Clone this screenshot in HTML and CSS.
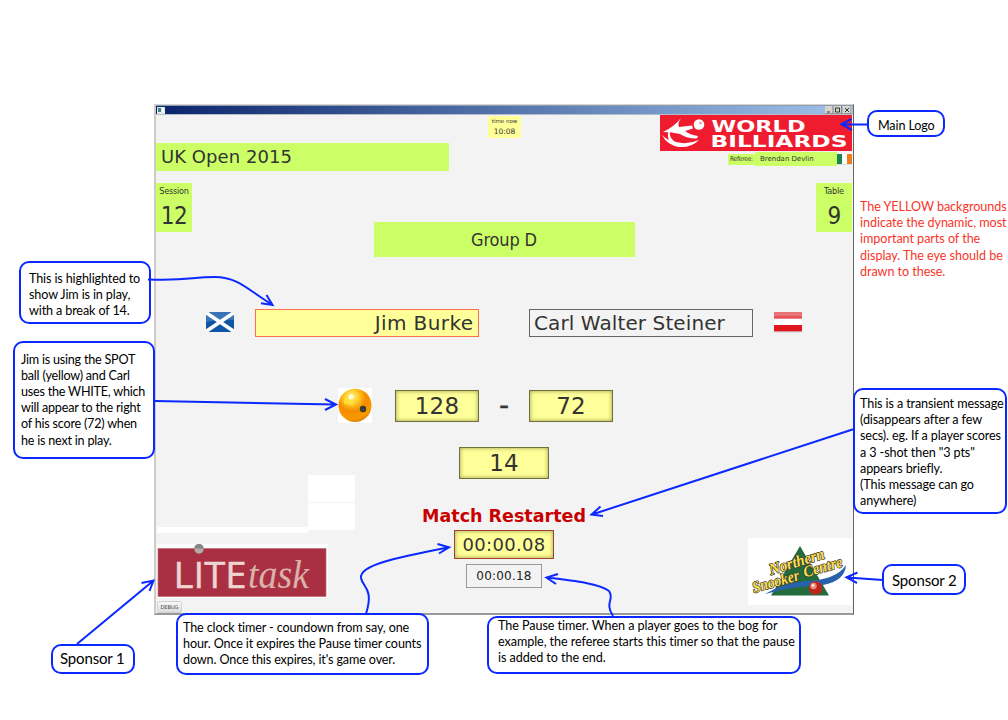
FILE: index.html
```html
<!DOCTYPE html>
<html lang="en">
<head>
<meta charset="utf-8">
<title>Scoreboard guide</title>
<link rel="stylesheet" href="styles.css">
</head>
<body>
<main class="canvas">
  <section class="window">
    <header class="titlebar">
      <svg class="appicon" width="8" height="7" viewBox="0 0 8 7"><rect width="8" height="7" fill="#e6eaea"/><rect x="1" y="1" width="3" height="4" fill="#398485"/><rect x="5" y="1" width="2" height="4" fill="#fff"/></svg>
      <svg class="controls" width="26" height="8" viewBox="0 0 26 8"><g fill="#d8d5cd"><rect width="8" height="8"/><rect x="8.500" width="8" height="8"/><rect x="18" width="8" height="8"/></g><path d="M0 7.700H8V0M8.500 7.700H16.500V0M18 7.700H26V0" fill="none" stroke="#55534f" stroke-width=".6"/><path d="M2 6H5M10.500 2H14.500V6H10.500ZM20 2L24 6M24 2L20 6" fill="none" stroke="#222" stroke-width=".9"/></svg>
    </header>
    <div class="board">
      <div class="head">
        <div class="event"><span class="t-event">UK Open 2015</span></div>
        <div class="now"><span class="t-nowlabel">time now</span><span class="t-now">10:08</span></div>
        <div class="brand">
          <svg class="brandlogo" width="192" height="36" viewBox="0 0 192 36">
            <rect width="192" height="36" fill="#ee1c2e"/>
            <g fill="#fff">
              <circle cx="39" cy="9.500" r="5.300"/>
              <path d="M3 17Q14 12 21 3Q17 9 19 12L32 10.500L33 13.500L25 16Q30 20 38 21L37 23.500Q28 24 20 19Q12 17 3 17Z"/>
              <path d="M11 12Q7 23 16 27Q27 30 39 25Q31 33 19 32Q7 30 2 20Q6 24 9 25Q6 18 11 12Z"/>
            </g>
            <circle cx="40.500" cy="8" r="1.500" fill="#f8a5ab"/>
            <g fill="#fff" font-family="DejaVu Sans" font-weight="bold">
              <text x="51.500" y="16.700" font-size="15" textLength="94" lengthAdjust="spacingAndGlyphs">WORLD</text>
              <text x="50.500" y="31.800" font-size="15" textLength="137" lengthAdjust="spacingAndGlyphs">BILLIARDS</text>
            </g>
          </svg>
          <div class="referee">
            <span class="reflabel"><span class="t-ref">Referee:</span></span>
            <span class="refname"><span class="t-refname">Brendan Devlin</span></span>
            <span class="irish"></span>
          </div>
        </div>
      </div>
      <div class="meta">
        <div class="tile"><span class="t-tilelabel">Session</span><span class="t-tile">12</span></div>
        <div class="group"><span class="t-group">Group D</span></div>
        <div class="tile"><span class="t-tilelabel">Table</span><span class="t-tile">9</span></div>
      </div>
      <div class="players">
        <svg width="28" height="21" viewBox="0 0 28 21"><rect width="28" height="20" fill="#0d55a5"/><path d="M0 0H28V8Q14 7 0 10Z" fill="#3975b6"/><path d="M0 .6L28 19.400M28 .6L0 19.400" stroke="#fff" stroke-width="3.600"/></svg>
        <div class="name active"><span class="t-jim">Jim Burke</span></div>
        <div class="name"><span class="t-carl">Carl Walter Steiner</span></div>
        <svg width="28" height="21" viewBox="0 0 28 21"><rect width="28" height="20" fill="#fff"/><rect width="28" height="6.500" fill="#e87478"/><path d="M0 4H28V6.500H0Z" fill="#e55359"/><rect y="13" width="28" height="6.500" fill="#e0161e"/><path d="M0 19.800H28" stroke="#b9a5a5" stroke-width=".8"/></svg>
      </div>
      <div class="scores">
        <svg class="ball" width="34" height="35" viewBox="0 0 34 35">
          <defs><radialGradient id="amber" cx=".4" cy=".25" r=".78"><stop offset="0" stop-color="#fff39c"/><stop offset=".3" stop-color="#ffc620"/><stop offset=".55" stop-color="#f58b00"/><stop offset=".85" stop-color="#f89a00"/><stop offset="1" stop-color="#d87c00"/></radialGradient></defs>
          <rect width="34" height="35" fill="#fff"/><circle cx="17" cy="17.300" r="16.600" fill="url(#amber)"/>
          <path d="M6 11Q12 6 17 9L15 17L6 16Z" fill="#ffe53a" opacity=".7"/><circle cx="13" cy="9" r="2.500" fill="#fff" opacity=".8"/>
          <circle cx="25" cy="21" r="3.200" fill="#353c30"/><circle cx="25.300" cy="21.800" r="1" fill="#465248"/>
        </svg>
        <div class="num"><span class="t-score">128</span></div>
        <span class="dash">-</span>
        <div class="num"><span class="t-score">72</span></div>
      </div>
      <div class="lower">
        <div class="left">
          <div class="blanks"><i class="strip"></i><span class="pair"><i></i><i></i></span></div>
          <svg class="lite" width="171" height="54" viewBox="0 0 171 54">
            <rect width="171" height="54" fill="#fff"/><rect x="1" y="4.500" width="168" height="48" fill="#a93043" stroke="#bf6a77" stroke-width=".7"/>
            <circle cx="42" cy="5" r="4.700" fill="#b5aca9"/><path d="M37.300 4.500A4.700 4.700 0 0 1 46.700 4.500Z" fill="#858684"/>
            <g fill="#eed5d0">
              <text x="16.500" y="44" font-family="Open Sans" font-size="37" textLength="73" lengthAdjust="spacingAndGlyphs" stroke="#eed5d0" stroke-width=".5">LITE</text>
              <text x="91" y="44" font-family="Liberation Serif" font-style="italic" font-size="39" textLength="61" lengthAdjust="spacingAndGlyphs" fill="#d9b2ac">task</text>
            </g>
          </svg>
          <button class="debug" type="button"><span class="t-debug">DEBUG</span></button>
        </div>
        <div class="middle">
          <div class="num break"><span class="t-score">14</span></div>
          <div class="message"><span class="t-message">Match Restarted</span></div>
          <div class="num timer"><span class="t-timer">00:00.08</span></div>
          <div class="pause"><span class="t-pause">00:00.18</span></div>
        </div>
        <svg class="northern" width="104" height="67" viewBox="0 0 104 67">
          <rect width="104" height="67" fill="#fff"/>
          <path d="M52 8L81 57.500H23Z" fill="#236b3c"/>
          <path d="M17 56Q35 45 58 43Q88 42 98 27Q97 43 75 47Q45 48 17 56Z" fill="#2862ac"/>
          <circle cx="67.500" cy="50" r="6.800" fill="#bd261f"/><circle cx="65.500" cy="48" r="3.200" fill="#e78c78"/><circle cx="65" cy="47.500" r="1.300" fill="#fff"/>
          <g font-family="Liberation Serif" font-style="italic" font-weight="bold" font-size="16" fill="#f9df58" stroke="#3b3722" stroke-width="1.400" paint-order="stroke" stroke-linejoin="round">
            <text transform="translate(23 37) rotate(-17)" textLength="57" lengthAdjust="spacingAndGlyphs">Northern</text>
            <text transform="translate(6 55) rotate(-16)" textLength="48" lengthAdjust="spacingAndGlyphs">Snooker</text>
            <text transform="translate(57 39.500) rotate(-16)" textLength="40" lengthAdjust="spacingAndGlyphs">Centre</text>
          </g>
        </svg>
      </div>
    </div>
  </section>

  <aside class="note highlight">
    <p>This is highlighted to</p><p>show Jim is in play,</p><p>with a break of 14.</p>
  </aside>
  <aside class="note spot">
    <p>Jim is using the SPOT</p><p>ball (yellow) and Carl</p><p>uses the WHITE, which</p><p>will appear to the right</p><p>of his score (72) when</p><p>he is next in play.</p>
  </aside>
  <aside class="note transient">
    <p>This is a transient message</p><p>(disappears after a few</p><p>secs). eg. If a player scores</p><p>a 3 -shot then "3 pts"</p><p>appears briefly.</p><p>(This message can go</p><p>anywhere)</p>
  </aside>
  <aside class="note clock">
    <p>The clock timer - coundown from say, one</p><p>hour. Once it expires the Pause timer counts</p><p>down. Once this expires, it's game over.</p>
  </aside>
  <aside class="note pausenote">
    <p>The Pause timer. When a player goes to the bog for</p><p>example, the referee starts this timer so that the pause</p><p>is added to the end.</p>
  </aside>
  <aside class="note mainlogo"><p>Main Logo</p></aside>
  <aside class="note sponsor1"><p>Sponsor 1</p></aside>
  <aside class="note sponsor2"><p>Sponsor 2</p></aside>
  <aside class="remark">
    <p>The YELLOW backgrounds</p><p>indicate the dynamic, most</p><p>important parts of the</p><p>display. The eye should be</p><p>drawn to these.</p>
  </aside>

  <svg class="arrows" width="1008" height="720" viewBox="0 0 1008 720">
    <path d="M148 279.500C190 281 190 277 215 277C238 277 248 290 272 304.500M266.500 295L272.500 305L261 303.300"/>
    <path d="M155 401L335 404.500M325 399L336 404.500L325 410"/>
    <path d="M868 124.500H842M851.500 119L841.500 124.300L852 130"/>
    <path d="M854 429L592 514.500M600.500 506.500L591.500 514.600L603 516"/>
    <path d="M77 644L153 581M141.500 583L153.500 580.500L149.500 591"/>
    <path d="M883 580L847 577.500M857.500 572.500L846.500 577.300L857 583"/>
    <path d="M366 614C374 588 363 588 361 578C359 565 395 558 448 547.500M437.500 544L449 547.300L439 553.500"/>
    <path d="M613 616C604 602 615 600 609 591C600 584 577 581 547 577.500M558 574L546.500 577.500L556 584"/>
  </svg>
</main>
</body>
</html>
```

FILE: styles.css
```css
* { box-sizing: border-box; }
body { margin: 0; background: #fff; }
p { margin: 0; }
.canvas { position: relative; width: 1008px; height: 720px; overflow: hidden; font-family: "DejaVu Sans", sans-serif; color: #333; }
svg { display: block; flex: none; }
span { white-space: nowrap; }

.window { position: absolute; left: 154px; top: 104px; width: 700px; height: 511px; background: #f3f3f3; border: 1px solid #d8d5cd; border-left: 2px solid #cfccc5; border-right: 1.500px solid #66645f; border-bottom: 2px solid #999; display: flex; flex-direction: column; }
.titlebar { height: 10px; flex: none; display: flex; align-items: center; justify-content: space-between; padding: 0 2px 0 1px; background: linear-gradient(90deg, #0a246a, #7a9ccb 75%, #a0c2e8); border-top: 1px solid #8c9cb8; border-bottom: 1px solid #b5bdcc; }
.board { width: 696px; flex: 1; display: flex; flex-direction: column; }

.head { height: 68px; display: grid; grid-template-columns: 293px 111px 292px; flex: none; }
.event { height: 28px; margin-top: 28px; padding: 0 0 2px 5px; background: #cf6; display: flex; align-items: center; }
.now { width: 33px; height: 22px; margin: 1px 0 0 39px; background: #ff9; display: flex; flex-direction: column; align-items: center; justify-content: space-around; }
.brand { display: flex; flex-direction: column; align-items: flex-end; }
.referee { display: flex; align-items: center; margin-top: 1px; height: 14px; }
.reflabel { width: 27px; height: 11px; background: #cf6; display: flex; align-items: center; padding-left: 2px; }
.refname { width: 82px; height: 14px; background: #cf6; display: flex; align-items: center; padding-left: 5px; }
.irish { width: 15px; height: 11px; background: linear-gradient(90deg, #188652 0 5px, #fff 5px 10px, #ef7d1a 10px); border: solid #ddd; border-width: 0 0 1px; }

.meta { height: 74px; flex: none; display: flex; justify-content: space-between; }
.tile { width: 36px; height: 49px; background: #cf6; display: flex; flex-direction: column; align-items: center; }
.group { width: 261px; height: 35px; align-self: flex-end; background: #cf6; display: flex; align-items: center; justify-content: center; }

.players { margin-top: 52px; height: 28px; flex: none; display: flex; align-items: center; padding-left: 50px; gap: 21px; }
.players svg { margin-bottom: 1px; }
.name { width: 224px; height: 28px; border: 1px solid #666; display: flex; align-items: center; padding: 0 5px 1px 4px; }
.name + .name { margin-left: 29px; }
.name.active { background: #ff9; border-color: #ff6f4d; justify-content: flex-end; }

.scores { margin-top: 51px; height: 35px; flex: none; display: flex; align-items: center; padding-left: 182px; }
.ball { margin-right: 23px; }
.num { width: 84px; height: 32px; background: #ff9; border: 1px solid #706f3c; box-shadow: inset 0 0 4px #99984f; display: flex; align-items: center; justify-content: center; }
.dash { width: 50px; text-align: center; font-size: 28px; line-height: 30px; -webkit-text-stroke: .3px #333; }

.lower { margin-top: 24px; height: 166px; flex: none; display: grid; grid-template-columns: 298px 100px 298px; }
.left { display: flex; flex-direction: column; padding: 28px 0 0 1px; }
.blanks { height: 58px; display: flex; align-items: flex-end; }
.strip { width: 151px; height: 6px; background: #fff; }
.pair { display: flex; flex-direction: column; gap: 1px; align-self: flex-start; }
.pair i { width: 47px; height: 27px; background: #fff; }
.lite { margin-top: 11px; }
.debug { margin-top: 3px; width: 25px; height: 12px; padding: 0; border: 1px solid #d2d2d2; border-radius: 2px; background: linear-gradient(#f8f8f8, #ddd); display: flex; align-items: center; justify-content: center; }
.middle { display: flex; flex-direction: column; align-items: center; }
.break { width: 90px; }
.message { height: 51px; display: flex; align-items: center; padding-top: 23px; color: #c80000; font-weight: bold; }
.timer { width: 100px; height: 29px; border-color: #a3412e; }
.pause { width: 76px; height: 24px; margin-top: 5px; border: 1px solid #999; display: flex; align-items: center; justify-content: center; }
.northern { justify-self: end; margin-top: 91px; }

.t-event { font-size: 18px; letter-spacing: .05px; }
.t-nowlabel { font-size: 5.500px; line-height: 8px; }
.t-now { font-size: 7.500px; line-height: 10px; }
.t-ref { font-family: "DejaVu Sans Condensed", "DejaVu Sans", sans-serif; font-size: 6.500px; line-height: 8px; letter-spacing: -.2px; }
.t-refname { font-size: 7px; line-height: 9px; letter-spacing: -.02px; }
.t-tilelabel { font-family: "DejaVu Sans Condensed", "DejaVu Sans", sans-serif; font-size: 9px; line-height: 16px; letter-spacing: -.2px; }
.t-tile { font-family: "DejaVu Sans Condensed", "DejaVu Sans", sans-serif; font-size: 24px; line-height: 34px; letter-spacing: -.6px; }
.t-group { font-family: "DejaVu Sans Condensed", "DejaVu Sans", sans-serif; font-size: 18px; letter-spacing: -.15px; }
.t-jim { font-size: 20px; letter-spacing: .4px; margin-right: -.4px; }
.t-carl { font-size: 20px; letter-spacing: .1px; }
.t-score { font-size: 23px; letter-spacing: .2px; }
.t-message { font-size: 17.500px; }
.t-timer { font-size: 18px; letter-spacing: .3px; }
.t-pause { font-size: 12px; letter-spacing: .2px; color: #222; }
.t-debug { font-family: "DejaVu Sans", sans-serif; font-size: 5px; color: #444; }

.note, .remark { position: absolute; font-family: Lato, sans-serif; font-size: 12.600px; line-height: 16.200px; letter-spacing: -.13px; color: #000; white-space: nowrap; }
.note { background: #fff; border: 2px solid #0a28ff; border-radius: 10px; }
.highlight { left: 19px; top: 261px; width: 132px; height: 63px; padding: 8px 0 0 8px; }
.spot { left: 13px; top: 341px; width: 142px; height: 118px; padding: 8.500px 0 0 6px; letter-spacing: -.22px; }
.transient { left: 853px; top: 388px; width: 154px; height: 126px; padding: 6px 0 0 5px; letter-spacing: -.11px; }
.clock { left: 176px; top: 613px; width: 253px; height: 62px; padding: 5px 0 0 5px; }
.pausenote { left: 487px; top: 616px; width: 314px; height: 58px; padding: 0 0 0 9px; letter-spacing: -.07px; }
.mainlogo { left: 867px; top: 110px; width: 78px; height: 27px; padding: 6px 0 0 9px; }
.sponsor1 { left: 51px; top: 644px; width: 84px; height: 30px; padding: 3px 0 0 7px; font-size: 15px; line-height: 18px; letter-spacing: -.15px; }
.sponsor2 { left: 882px; top: 564px; width: 84px; height: 31px; padding: 4.500px 0 0 8px; font-size: 15px; line-height: 18px; letter-spacing: -.15px; }
.remark { left: 860px; top: 199px; color: #f9352a; letter-spacing: -.05px; }
.arrows { position: absolute; left: 0; top: 0; fill: none; stroke: #0a28ff; stroke-width: 2; pointer-events: none; }
```
